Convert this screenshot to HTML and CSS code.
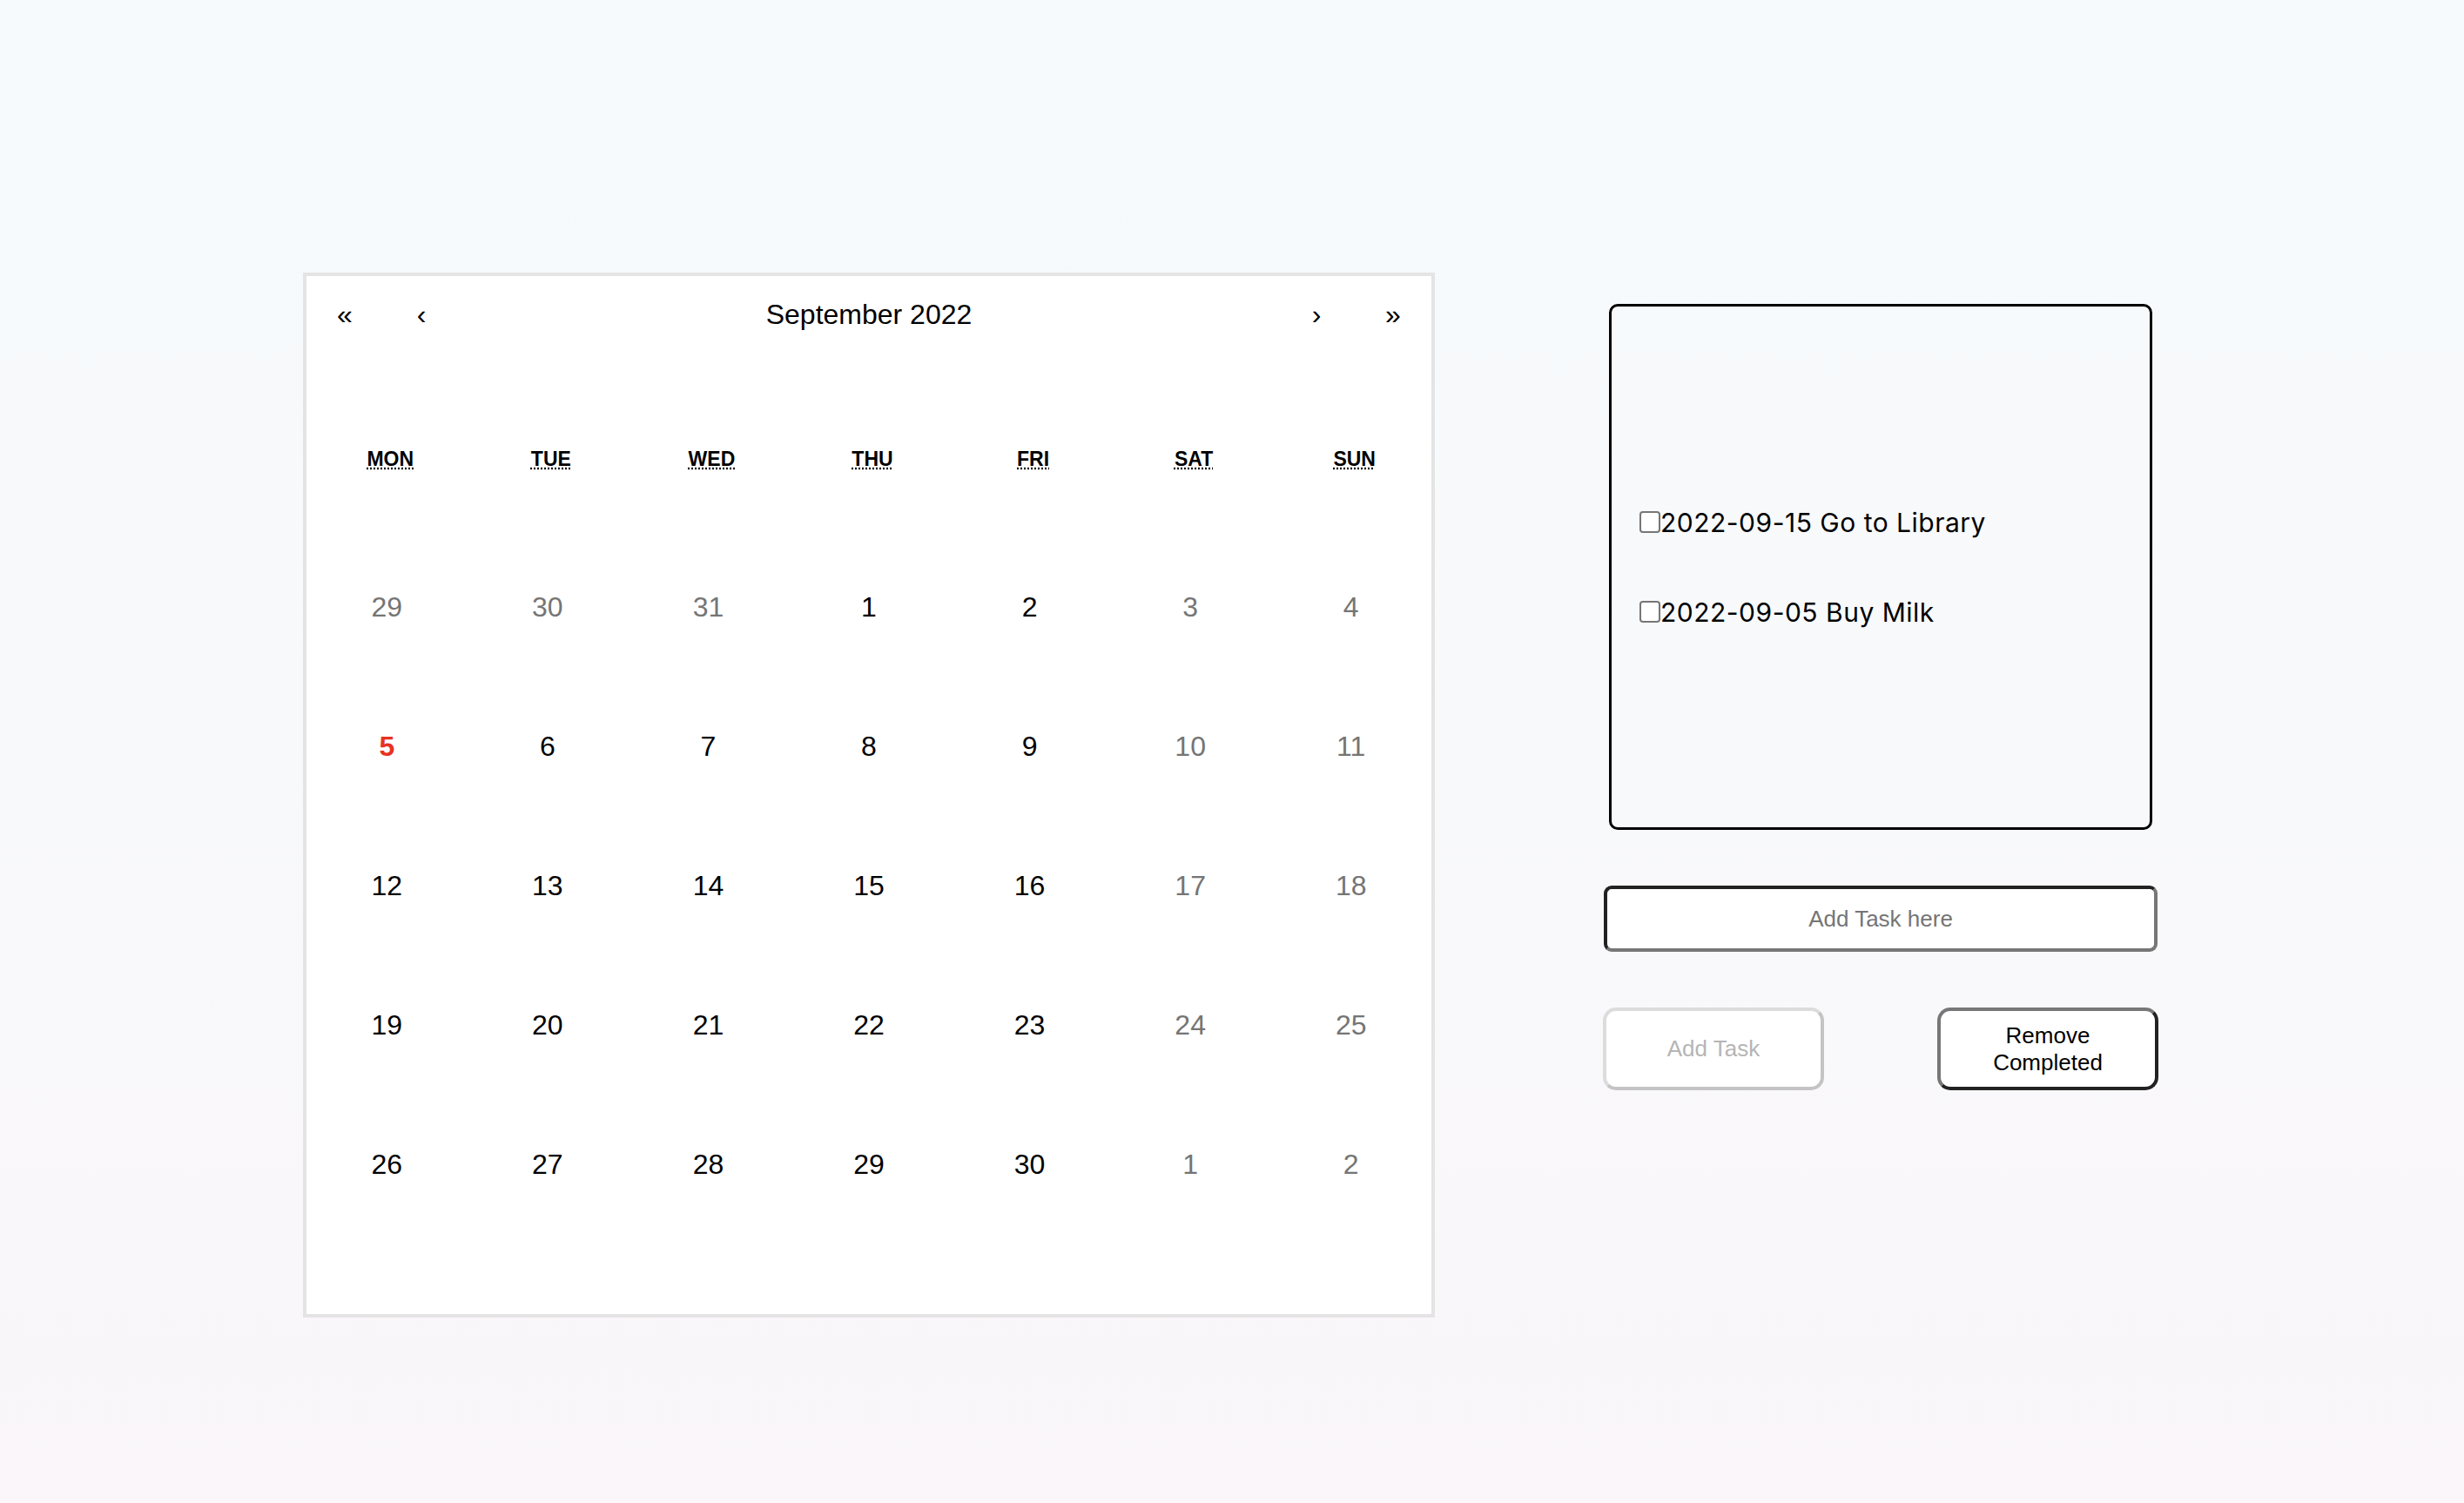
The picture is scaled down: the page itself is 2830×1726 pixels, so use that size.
FILE: index.html
```html
<!DOCTYPE html>
<html lang="en">
<head>
<meta charset="utf-8">
<title>Calendar Tasks</title>
<link rel="stylesheet" href="styles.css">
</head>
<body>
<main class="page">
  <section class="calendar">
    <div class="cal-nav">
      <button class="nav-btn">«</button>
      <button class="nav-btn">‹</button>
      <button class="nav-label">September 2022</button>
      <button class="nav-btn">›</button>
      <button class="nav-btn">»</button>
    </div>
    <div class="weekdays">
      <div class="weekday"><abbr title="Monday">Mon</abbr></div>
      <div class="weekday"><abbr title="Tuesday">Tue</abbr></div>
      <div class="weekday"><abbr title="Wednesday">Wed</abbr></div>
      <div class="weekday"><abbr title="Thursday">Thu</abbr></div>
      <div class="weekday"><abbr title="Friday">Fri</abbr></div>
      <div class="weekday"><abbr title="Saturday">Sat</abbr></div>
      <div class="weekday"><abbr title="Sunday">Sun</abbr></div>
    </div>
    <div class="days">
      <div class="day muted">29</div><div class="day muted">30</div><div class="day muted">31</div><div class="day">1</div><div class="day">2</div><div class="day muted">3</div><div class="day muted">4</div>
      <div class="day marked">5</div><div class="day">6</div><div class="day">7</div><div class="day">8</div><div class="day">9</div><div class="day muted">10</div><div class="day muted">11</div>
      <div class="day">12</div><div class="day">13</div><div class="day">14</div><div class="day">15</div><div class="day">16</div><div class="day muted">17</div><div class="day muted">18</div>
      <div class="day">19</div><div class="day">20</div><div class="day">21</div><div class="day">22</div><div class="day">23</div><div class="day muted">24</div><div class="day muted">25</div>
      <div class="day">26</div><div class="day">27</div><div class="day">28</div><div class="day">29</div><div class="day">30</div><div class="day muted">1</div><div class="day muted">2</div>
    </div>
  </section>

  <section class="tasks">
    <div class="task-box">
      <label class="task"><input type="checkbox" class="check">2022-09-15 Go to Library</label>
      <label class="task"><input type="checkbox" class="check">2022-09-05 Buy Milk</label>
    </div>
    <input class="task-input" type="text" placeholder="Add Task here">
    <div class="actions">
      <button class="btn btn-disabled" disabled>Add Task</button>
      <button class="btn btn-remove">Remove<br>Completed</button>
    </div>
  </section>
</main>
</body>
</html>
```

FILE: styles.css
```css
* { box-sizing: border-box; }

html, body {
  margin: 0;
  height: 100%;
}

body {
  background: linear-gradient(180deg, #f6fafc 0%, #f8f9fb 50%, #faf6f9 100%);
  font-family: "Liberation Sans", Arial, sans-serif;
  color: #000;
}

.page {
  display: flex;
  align-items: flex-start;
  gap: 193px;
  padding: 313px 0 0 348px;
  min-height: 1726px;
}

/* Calendar */
.calendar {
  width: 1300px;
  height: 1200px;
  background: #fff;
  border: 4px solid #e4e4e4;
  font-family: "Liberation Sans", Arial, sans-serif;
}

.cal-nav {
  display: flex;
  height: 88px;
  margin-bottom: 32px;
}

.nav-btn,
.nav-label {
  background: none;
  border: 0;
  padding: 0;
  margin: 0;
  font-family: inherit;
  font-size: 32px;
  color: #000;
}

.nav-btn {
  width: 88px;
}

.nav-label {
  flex: 1;
}

.weekdays {
  display: grid;
  grid-template-columns: repeat(7, 1fr);
  height: 180px;
}

.weekday {
  display: flex;
  align-items: center;
  justify-content: center;
  padding-left: 8px;
  font-size: 23px;
  font-weight: bold;
  text-transform: uppercase;
}

.weekday abbr {
  text-decoration: underline dotted;
  text-underline-offset: 3px;
}

.days {
  display: grid;
  grid-template-columns: repeat(7, 1fr);
  grid-auto-rows: 160px;
}

.day {
  display: flex;
  align-items: center;
  justify-content: center;
  font-size: 32px;
  color: #000;
}

.day.muted { color: #757575; }

.day.marked {
  color: #e8321f;
  font-weight: bold;
}

/* Tasks */
.tasks {
  width: 638px;
  margin-top: 36px;
  display: flex;
  flex-direction: column;
  gap: 64px;
}

.task-box {
  width: 624px;
  height: 604px;
  margin: 0 auto;
  border: 3px solid #000;
  border-radius: 10px;
  display: flex;
  flex-direction: column;
  justify-content: center;
  gap: 68px;
  padding: 0 32px;
}

.task {
  display: flex;
  align-items: center;
  height: 35px;
  font-family: Inter, "Noto Sans", sans-serif;
  font-size: 30px;
  letter-spacing: 0.5px;
  color: #000;
}

.check {
  appearance: none;
  -webkit-appearance: none;
  width: 24px;
  height: 25px;
  margin: 0;
  border: 2px solid #767676;
  border-radius: 4px;
  background: #fff;
  flex: none;
}

.task-input {
  width: 636px;
  height: 76px;
  margin: 0 1px;
  border: 4px solid;
  border-color: #222 #777 #777 #222;
  border-radius: 9px;
  background: #fff;
  text-align: center;
  font-family: "Liberation Sans", Arial, sans-serif;
  font-size: 26px;
  color: #000;
  outline: none;
}

.task-input::placeholder { color: #757575; }

.actions {
  display: flex;
  justify-content: space-between;
}

.btn {
  width: 254px;
  height: 95px;
  border: 4px solid;
  border-radius: 15px;
  background: #fff;
  font-family: "Liberation Sans", Arial, sans-serif;
  font-size: 26px;
  line-height: 31px;
  padding: 0;
}

.btn-disabled {
  border-color: #dcdcdc #c4c4c4 #c4c4c4 #dcdcdc;
  color: #b5b5b5;
}

.btn-remove {
  border-color: #777 #222 #222 #777;
  color: #000;
}
```
